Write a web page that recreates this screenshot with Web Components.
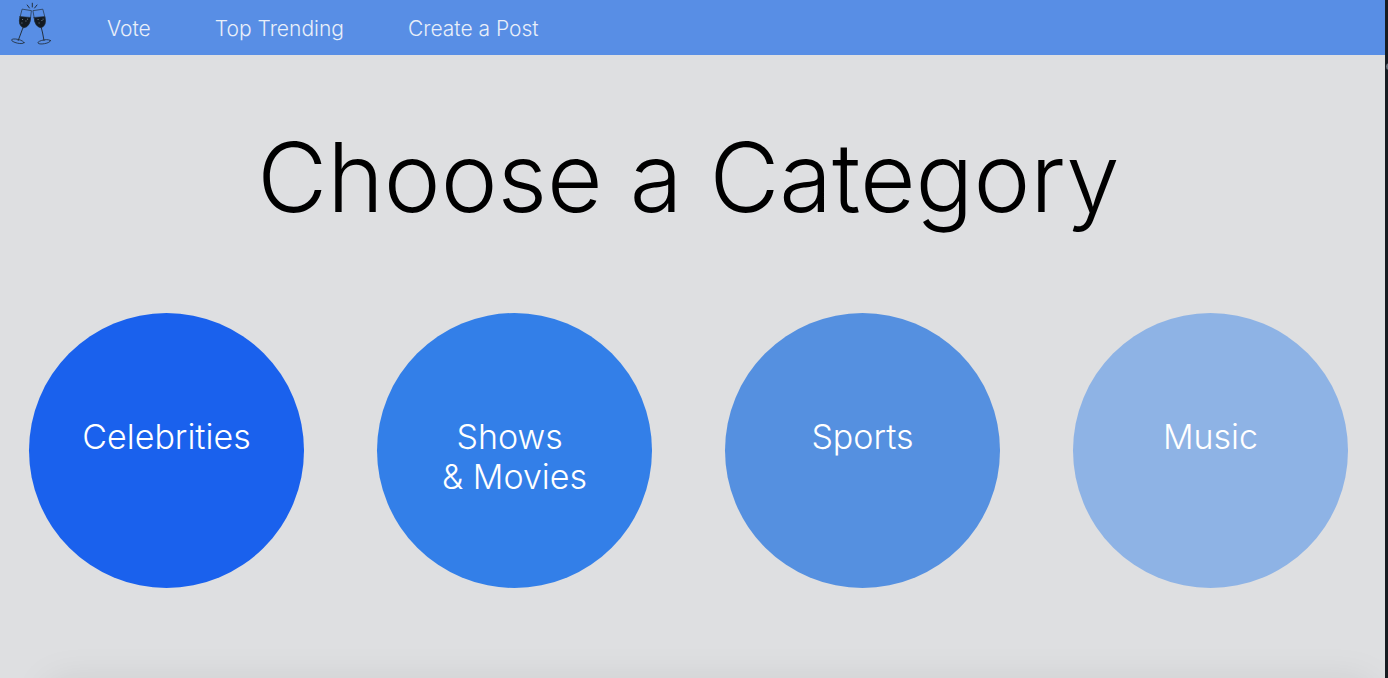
<!DOCTYPE html>
<html lang="en">
<head>
<meta charset="utf-8">
<title>Choose a Category</title>
<style>
html, body { margin: 0; min-height: 100%; }
body { background: #dedfe1; font-family: Inter, "Liberation Sans", sans-serif; font-weight: 300; }
</style>
</head>
<body>
<app-shell>
  <site-nav slot="nav">
    <nav-link href="#vote">Vote</nav-link>
    <nav-link href="#trending">Top Trending</nav-link>
    <nav-link href="#create">Create a Post</nav-link>
  </site-nav>
  <page-title>Choose a Category</page-title>
  <category-list>
    <category-circle style="--fill:#1a61ed">Celebrities</category-circle>
    <category-circle style="--fill:#337fe8">Shows&nbsp;<br>&amp; Movies</category-circle>
    <category-circle style="--fill:#5590e0">Sports</category-circle>
    <category-circle style="--fill:#8eb3e5">Music</category-circle>
  </category-list>
</app-shell>
<script>
function define(name, html) {
  customElements.define(name, class extends HTMLElement {
    constructor() {
      super();
      const t = document.createElement('template');
      t.innerHTML = html;
      this.attachShadow({ mode: 'open' }).append(t.content.cloneNode(true));
    }
    connectedCallback() {
      const a = this.shadowRoot.querySelector('a[data-link]');
      if (a) a.href = this.getAttribute('href') || '#';
    }
  });
}

define('app-shell', `
<style>
:host { display: flex; min-height: 100vh; position: relative; }
.page { flex: 1; min-width: 0; }
main { padding-right: 8px; }
.edge { width: 3px; background: #171b21; position: relative; overflow: hidden; }
.edge::after { content: ""; position: absolute; left: 1px; top: 63px; width: 7px; height: 7px; border-radius: 50%; background: #6d7680; }
.shade { position: absolute; left: 0; right: 3px; bottom: 0; height: 32px; overflow: hidden; pointer-events: none; }
.shade::after { content: ""; position: absolute; left: 50px; right: 16px; top: 100%; height: 40px; box-shadow: 0 6px 40px rgba(0,0,0,.1); }
</style>
<div class="page">
  <slot name="nav"></slot>
  <main><slot></slot></main>
</div>
<div class="edge"></div>
<div class="shade"></div>`);

define('site-nav', `
<style>
:host { display: block; background: #588ee5; }
nav { display: flex; align-items: center; height: 55px; padding-left: 10px; box-sizing: border-box; }
.logo { display: block; width: 42px; height: 55px; margin-right: 55px; }
svg { display: block; }
.links { display: flex; gap: 64px; padding-top: 2px; }
</style>
<nav aria-label="Main">
  <a class="logo" href="#home" aria-label="Home">
    <svg width="42" height="55" viewBox="10 0 42 55" fill="none" stroke="#23303f" stroke-linecap="round" stroke-linejoin="round">
      <path d="M27.2 5l2.2 3M32.3 3.2V7M37 5l-2.4 3" stroke-width="1"/>
      <path d="M22.5 9.2L31.4 10.6L30.4 19Q29.5 26.5 23.5 27.2Q18.6 25.5 20 17.5Z" stroke-width=".7"/>
      <path d="M20 16.6L30.6 17.4Q30.4 26.6 23.6 27.9Q17.5 25.6 20 16.6Z" fill="#121920" stroke-width=".6"/>
      <path d="M23 27.6L21 33L18.2 40.5" stroke-width="1"/>
      <ellipse cx="17.8" cy="41.3" rx="6.4" ry="1.9" transform="rotate(13 17.8 41.3)" stroke-width=".8"/>
      <path d="M22.5 19.5h.2M25.8 21h.2M21.8 23h.2M27.5 19.2h.2" stroke="#8b9bad" stroke-width=".8"/>
      <path d="M33.3 10.6L42.8 9.2L45 17.5Q46 25.5 41 27.2Q35.5 26.5 34.4 19Z" stroke-width=".7"/>
      <path d="M34.2 17.4L44.8 16.6Q47.2 25.6 41.2 27.9Q34.4 26.6 34.2 17.4Z" fill="#121920" stroke-width=".6"/>
      <path d="M41.3 27.6L42.6 33L44 40.5" stroke-width="1"/>
      <ellipse cx="44.2" cy="41.8" rx="6.4" ry="1.9" transform="rotate(-10 44.2 41.8)" stroke-width=".8"/>
      <path d="M38 19.5h.2M41.8 20.5h.2M39 23h.2M43 19.2h.2" stroke="#8b9bad" stroke-width=".8"/>
    </svg>
  </a>
  <div class="links"><slot></slot></div>
</nav>`);

define('nav-link', `
<style>
:host { display: block; }
a { display: block; color: #e9eff9; text-decoration: none; font-size: 21px; line-height: 28px; white-space: nowrap; }
</style>
<a data-link href="#"><slot></slot></a>`);

define('page-title', `
<style>
:host { display: block; padding: 62px 0 76px; }
h1 { margin: 0; font-size: 96px; line-height: 120px; font-weight: 300; text-align: center; color: #000; }
</style>
<h1><slot></slot></h1>`);

define('category-list', `
<style>
:host { display: flex; justify-content: space-between; padding: 0 29px 90px; }
</style>
<slot></slot>`);

define('category-circle', `
<style>
:host { display: block; }
button { display: flex; justify-content: center; align-items: flex-start; width: 275px; height: 275px; padding: 104px 0 0; box-sizing: border-box; border: 0; border-radius: 50%; background: var(--fill); color: #fff; font: inherit; font-size: 34px; line-height: 40px; text-align: center; cursor: pointer; }
</style>
<button type="button"><span><slot></slot></span></button>`);
</script>
</body>
</html>
